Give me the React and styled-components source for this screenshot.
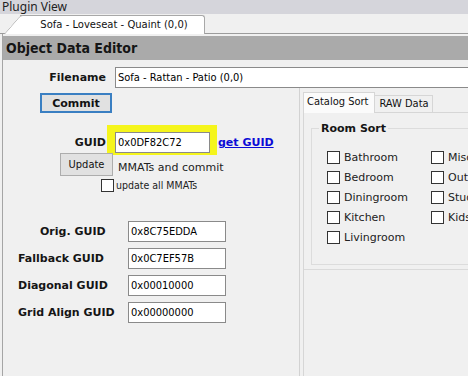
import React from "react";
import styled, { createGlobalStyle } from "styled-components";

const VERDANA = `"DejaVu Sans", Verdana, sans-serif`;
const TAHOMA = `"DejaVu Sans Condensed", Tahoma, sans-serif`;
const SEGOE = `"Noto Sans", "Segoe UI", sans-serif`;

const ROOMS = [
  "Bathroom",
  "Bedroom",
  "Diningroom",
  "Kitchen",
  "Livingroom",
  "Misc",
  "Outdoor",
  "Study",
  "Kids",
];

const GUID_FIELDS = [
  { label: "Orig. GUID", value: "0x8C75EDDA", indent: 37 },
  { label: "Fallback GUID", value: "0x0C7EF57B", indent: 15 },
  { label: "Diagonal GUID", value: "0x00010000", indent: 15 },
  { label: "Grid Align GUID", value: "0x00000000", indent: 15 },
];

function App() {
  return (
    <>
      <GlobalStyle />
      <Window>
        <TitleBar>Plugin View</TitleBar>
        <TabStrip>
          <DocTab>Sofa - Loveseat - Quaint (0,0)</DocTab>
        </TabStrip>
        <Editor>
          <Header>Object Data Editor</Header>
          <FilenameRow>
            <FieldLabel $width={103}>Filename</FieldLabel>
            <TextBox $width={400} defaultValue="Sofa - Rattan - Patio (0,0)" />
          </FilenameRow>
          <Body>
            <LeftPane>
              <Button $primary>Commit</Button>
              <GuidRow>
                <FieldLabel $width={103} $drop>
                  GUID
                </FieldLabel>
                <Highlight>
                  <TextBox $width={95} defaultValue="0x0DF82C72" />
                </Highlight>
                <Link href="#">get GUID</Link>
              </GuidRow>
              <UpdateRow>
                <Button>Update</Button>
                <Note>MMATs and commit</Note>
              </UpdateRow>
              <CheckRow>
                <Box />
                <SmallText>update all MMATs</SmallText>
              </CheckRow>
              <Fields>
                {GUID_FIELDS.map((f) => (
                  <React.Fragment key={f.label}>
                    <GridLabel $indent={f.indent}>{f.label}</GridLabel>
                    <TextBox $width={98} defaultValue={f.value} />
                  </React.Fragment>
                ))}
              </Fields>
            </LeftPane>
            <RightPane>
              <TabHeaders>
                <PageTab $active>Catalog Sort</PageTab>
                <PageTab>RAW Data</PageTab>
              </TabHeaders>
              <TabPage>
                <SortPanel>
                  <Group>
                    <Legend>Room Sort</Legend>
                    <RoomGrid>
                      {ROOMS.map((r) => (
                        <CheckItem key={r}>
                          <Box />
                          <span>{r}</span>
                        </CheckItem>
                      ))}
                    </RoomGrid>
                  </Group>
                </SortPanel>
              </TabPage>
            </RightPane>
          </Body>
        </Editor>
      </Window>
    </>
  );
}

export default App;

const GlobalStyle = createGlobalStyle`
  html, body {
    margin: 0;
    padding: 0;
    background: #f0f0f0;
  }
  * {
    box-sizing: border-box;
  }
`;

const Window = styled.div`
  width: 468px;
  height: 376px;
  overflow: hidden;
  background: #f0f0f0;
  display: flex;
  flex-direction: column;
  color: #111;
`;

const TitleBar = styled.div`
  flex: none;
  height: 14px;
  padding-left: 2px;
  background: #d5d5db;
  font: 12px/14px ${SEGOE};
  color: #222;
  white-space: nowrap;
`;

const TabStrip = styled.div`
  flex: none;
  height: 20px;
  padding-top: 1px;
  border-bottom: 1px solid #9c9c9c;
  display: flex;
`;

const DocTab = styled.div`
  position: relative;
  isolation: isolate;
  margin-left: 20px;
  width: 185px;
  height: 19px;
  margin-bottom: -1px;
  padding-left: 4px;
  background: #fff;
  border-top: 1px solid #a8a8a8;
  border-right: 1px solid #a8a8a8;
  border-top-right-radius: 3px;
  font: 10px/17px ${VERDANA};
  text-align: center;
  white-space: nowrap;

  &::before {
    content: "";
    position: absolute;
    z-index: -1;
    left: -16px;
    top: -1px;
    bottom: 0;
    width: 30px;
    background: #fff;
    border-left: 1px solid #a8a8a8;
    border-top: 1px solid #a8a8a8;
    border-top-left-radius: 3px;
    transform-origin: bottom left;
    transform: skewX(-41deg);
  }
`;

const Editor = styled.div`
  flex: 1;
  margin-left: 2px;
  padding-top: 2px;
  border-left: 1px solid #a5a5a5;
  display: flex;
  flex-direction: column;
  min-height: 0;
`;

const Header = styled.div`
  height: 24px;
  padding-left: 3px;
  background: #aaaaaa;
  font: bold 14px/24px "DejaVu Sans Condensed", Tahoma, sans-serif;
  color: #151515;
`;

const FilenameRow = styled.div`
  height: 28px;
  padding-top: 7px;
  display: flex;
  align-items: center;
`;

const FieldLabel = styled.label`
  flex: none;
  width: ${(p) => p.$width}px;
  margin-right: ${(p) => (p.$drop ? 1 : 9)}px;
  margin-bottom: ${(p) => (p.$drop ? 2 : 0)}px;
  text-align: right;
  font: bold 11px/21px ${VERDANA};
  color: #151515;
`;

const TextBox = styled.input`
  flex: none;
  width: ${(p) => p.$width}px;
  height: 21px;
  margin: 0;
  padding: 0 2px;
  border: 1px solid #8a8a8a;
  border-radius: 0;
  background: #fff;
  font: 11px ${TAHOMA};
  color: #000;
  outline: none;
`;

const Body = styled.div`
  flex: 1;
  display: flex;
  min-height: 0;
`;

const LeftPane = styled.div`
  flex: none;
  width: 296px;
  display: flex;
  flex-direction: column;
`;

const Button = styled.button`
  flex: none;
  margin: ${(p) => (p.$primary ? "5px 0 0 37px" : "0")};
  width: ${(p) => (p.$primary ? 72 : 53)}px;
  height: ${(p) => (p.$primary ? 20 : 23)}px;
  padding: 0;
  background: #e1e1e1;
  border: ${(p) => (p.$primary ? "2px solid #3a7fc2" : "1px solid #adadad")};
  border-radius: 0;
  font: ${(p) => (p.$primary ? `bold 11px ${VERDANA}` : `11px ${TAHOMA}`)};
  color: #111;
`;

const GuidRow = styled.div`
  margin-top: 12px;
  display: flex;
  align-items: flex-end;
`;

const Highlight = styled.div`
  padding: 7px 7px 2px 8px;
  background: #f5f51c;
`;

const Link = styled.a`
  margin: 0 0 2px 1px;
  font: bold 11px/21px ${VERDANA};
  color: #0b0bd6;
  text-decoration: underline;
`;

const UpdateRow = styled.div`
  margin: -2px 0 0 57px;
  display: flex;
  align-items: center;
  gap: 5px;
`;

const Note = styled.span`
  padding-top: 5px;
  font: 11px ${VERDANA};
  color: #222;
`;

const CheckRow = styled.div`
  margin: 3px 0 0 98px;
  display: flex;
  align-items: center;
  gap: 2px;
`;

const Box = styled.span`
  flex: none;
  width: 13px;
  height: 13px;
  border: 1px solid #333;
  background: #fff;
`;

const SmallText = styled.span`
  font: 10.5px/13px ${TAHOMA};
  color: #222;
`;

const Fields = styled.div`
  margin-top: 29px;
  display: grid;
  grid-template-columns: 125px 98px;
  grid-auto-rows: 21px;
  row-gap: 6px;
  align-items: center;
`;

const GridLabel = styled.label`
  padding-left: ${(p) => p.$indent}px;
  font: bold 11px ${VERDANA};
  color: #151515;
  white-space: nowrap;
`;

const RightPane = styled.div`
  flex: 1;
  padding: 4px 0 0 3px;
  border-left: 1px solid #d2d2d2;
  display: flex;
  flex-direction: column;
  min-width: 0;
`;

const TabHeaders = styled.div`
  height: 20px;
  display: flex;
  align-items: flex-end;
`;

const PageTab = styled.div`
  position: relative;
  z-index: ${(p) => (p.$active ? 1 : 0)};
  height: ${(p) => (p.$active ? 21 : 17)}px;
  margin-bottom: ${(p) => (p.$active ? -1 : 0)}px;
  padding: ${(p) => (p.$active ? "0 6px 0 3px" : "0 3px 0 4px")};
  background: ${(p) => (p.$active ? "#fbfbfb" : "#f0f0f0")};
  border: 1px solid #d6d6d6;
  border-bottom: none;
  border-left-width: ${(p) => (p.$active ? 1 : 0)}px;
  font: 11px/${(p) => (p.$active ? 18 : 16)}px ${TAHOMA};
  color: #111;
  white-space: nowrap;
`;

const TabPage = styled.div`
  flex: 1;
  border-top: 1px solid #d6d6d6;
  border-left: 1px solid #d6d6d6;
  background: #f0f0f0;
`;

const SortPanel = styled.div`
  height: 157px;
  padding: 9px 0 0 7px;
  border-bottom: 1px solid #dadada;
`;

const Group = styled.fieldset`
  width: 220px;
  height: 143px;
  margin: 0;
  padding: 0;
  min-inline-size: 0;
  border: 1px solid #dcdcdc;
`;

const Legend = styled.legend`
  margin-left: 7px;
  padding: 0 2px;
  font: bold 11px/13px ${VERDANA};
  color: #151515;
`;

const RoomGrid = styled.div`
  margin: 12px 0 0 15px;
  display: grid;
  grid-auto-flow: column;
  grid-template-rows: repeat(5, 20px);
  grid-template-columns: 104px 104px;
`;

const CheckItem = styled.label`
  display: flex;
  align-items: center;
  gap: 4px;
  font: 11px ${VERDANA};
  color: #222;
  white-space: nowrap;
`;
